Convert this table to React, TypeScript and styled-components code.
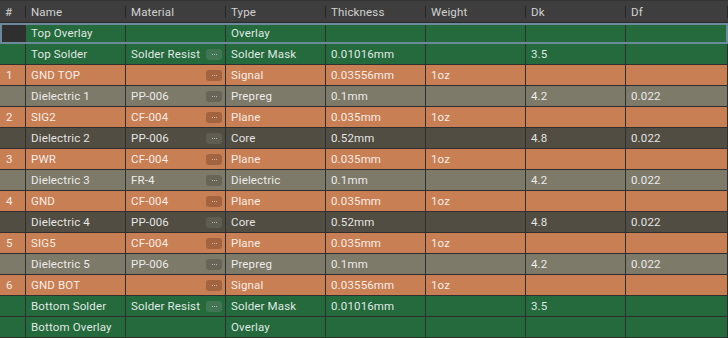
import React from "react";
import styled, { createGlobalStyle, css } from "styled-components";

const Global = createGlobalStyle`
  html, body { margin: 0; padding: 0; background: #2b2b2b; }
  body { font-family: "Roboto", "Noto Sans", sans-serif; }
`;

type Kind = "overlay" | "mask" | "signal" | "plane" | "prepreg" | "core";

const bg: Record<Kind, string> = {
  overlay: "#246a3d",
  mask: "#246a3d",
  signal: "#c97f54",
  plane: "#c97f54",
  prepreg: "#7e7a6a",
  core: "#514d42",
};

const btnBg: Record<Kind, string> = {
  overlay: "rgba(150,150,150,0.25)",
  mask: "rgba(150,150,150,0.25)",
  signal: "rgba(60,30,15,0.28)",
  plane: "rgba(60,30,15,0.28)",
  prepreg: "rgba(40,38,30,0.25)",
  core: "rgba(160,160,150,0.18)",
};

const COLS = "26px 100px 100px 100px 100px 100px 100px 102px";

const Table = styled.div`
  width: 728px;
  height: 338px;
  overflow: hidden;
  background: #2b2b2b;
  display: flex;
  flex-direction: column;
`;

const HeaderRow = styled.div`
  display: grid;
  grid-template-columns: ${COLS};
  height: 21px;
  background: #3e3e3e;
  border-top: 1px solid #333;
  border-bottom: 1px solid #2a2a2a;
`;

const HeaderCell = styled.div`
  display: flex;
  align-items: center;
  padding-left: 5px;
  font-size: 11.5px;
  letter-spacing: 0.15px;
  color: #d2d2d2;
  position: relative;
  &::after {
    content: "";
    position: absolute;
    right: 0;
    top: 5px;
    bottom: 4px;
    width: 1px;
    background: #262626;
  }
`;

const Row = styled.div<{ $kind: Kind; $selected?: boolean }>`
  display: grid;
  grid-template-columns: ${COLS};
  height: 20px;
  border-bottom: 1px solid #2f2f2f;
  background: ${(p) => bg[p.$kind]};
  ${(p) =>
    p.$selected &&
    css`
      outline: 2px solid #6c8a9b;
      outline-offset: -2px;
      border-bottom-color: transparent;
    `}
`;

const Cell = styled.div<{ $num?: boolean; $dark?: boolean }>`
  display: flex;
  align-items: center;
  padding-left: ${(p) => (p.$num ? "6px" : "5px")};
  padding-right: 5px;
  font-size: 11.5px;
  letter-spacing: 0.15px;
  color: rgba(255, 255, 255, 0.88);
  border-right: 1px solid #2f2f2f;
  white-space: nowrap;
  overflow: hidden;
  ${(p) =>
    p.$dark &&
    css`
      background: #2f2f2f;
    `}
`;

const MatCell = styled(Cell)`
  justify-content: space-between;
`;

const Ellipsis = styled.span<{ $kind: Kind }>`
  width: 16px;
  height: 11px;
  border-radius: 3px;
  background: ${(p) => btnBg[p.$kind]};
  display: flex;
  align-items: center;
  justify-content: center;
  gap: 1px;
  margin-right: -2px;
  flex-shrink: 0;
`;

const Dot = styled.span`
  width: 1px;
  height: 1px;
  background: rgba(255, 255, 255, 0.55);
`;

type Layer = {
  num?: string;
  name: string;
  material?: string;
  button?: boolean;
  type: string;
  thickness?: string;
  weight?: string;
  dk?: string;
  df?: string;
  kind: Kind;
  selected?: boolean;
};

const layers: Layer[] = [
  { name: "Top Overlay", type: "Overlay", kind: "overlay", selected: true },
  { name: "Top Solder", material: "Solder Resist", button: true, type: "Solder Mask", thickness: "0.01016mm", dk: "3.5", kind: "mask" },
  { num: "1", name: "GND TOP", button: true, type: "Signal", thickness: "0.03556mm", weight: "1oz", kind: "signal" },
  { name: "Dielectric 1", material: "PP-006", button: true, type: "Prepreg", thickness: "0.1mm", dk: "4.2", df: "0.022", kind: "prepreg" },
  { num: "2", name: "SIG2", material: "CF-004", button: true, type: "Plane", thickness: "0.035mm", weight: "1oz", kind: "plane" },
  { name: "Dielectric 2", material: "PP-006", button: true, type: "Core", thickness: "0.52mm", dk: "4.8", df: "0.022", kind: "core" },
  { num: "3", name: "PWR", material: "CF-004", button: true, type: "Plane", thickness: "0.035mm", weight: "1oz", kind: "plane" },
  { name: "Dielectric 3", material: "FR-4", button: true, type: "Dielectric", thickness: "0.1mm", dk: "4.2", df: "0.022", kind: "prepreg" },
  { num: "4", name: "GND", material: "CF-004", button: true, type: "Plane", thickness: "0.035mm", weight: "1oz", kind: "plane" },
  { name: "Dielectric 4", material: "PP-006", button: true, type: "Core", thickness: "0.52mm", dk: "4.8", df: "0.022", kind: "core" },
  { num: "5", name: "SIG5", material: "CF-004", button: true, type: "Plane", thickness: "0.035mm", weight: "1oz", kind: "plane" },
  { name: "Dielectric 5", material: "PP-006", button: true, type: "Prepreg", thickness: "0.1mm", dk: "4.2", df: "0.022", kind: "prepreg" },
  { num: "6", name: "GND BOT", button: true, type: "Signal", thickness: "0.03556mm", weight: "1oz", kind: "signal" },
  { name: "Bottom Solder", material: "Solder Resist", button: true, type: "Solder Mask", thickness: "0.01016mm", dk: "3.5", kind: "mask" },
  { name: "Bottom Overlay", type: "Overlay", kind: "overlay" },
];

const headers = ["#", "Name", "Material", "Type", "Thickness", "Weight", "Dk", "Df"];

export default function App() {
  return (
    <>
      <Global />
      <Table>
        <HeaderRow>
          {headers.map((h) => (
            <HeaderCell key={h}>{h}</HeaderCell>
          ))}
        </HeaderRow>
        {layers.map((l, i) => (
          <Row key={i} $kind={l.kind} $selected={l.selected}>
            <Cell $num $dark={l.selected}>{l.num}</Cell>
            <Cell>{l.name}</Cell>
            <MatCell>
              <span>{l.material}</span>
              {l.button && (
                <Ellipsis $kind={l.kind}>
                  <Dot />
                  <Dot />
                  <Dot />
                </Ellipsis>
              )}
            </MatCell>
            <Cell>{l.type}</Cell>
            <Cell>{l.thickness}</Cell>
            <Cell>{l.weight}</Cell>
            <Cell>{l.dk}</Cell>
            <Cell>{l.df}</Cell>
          </Row>
        ))}
      </Table>
    </>
  );
}
